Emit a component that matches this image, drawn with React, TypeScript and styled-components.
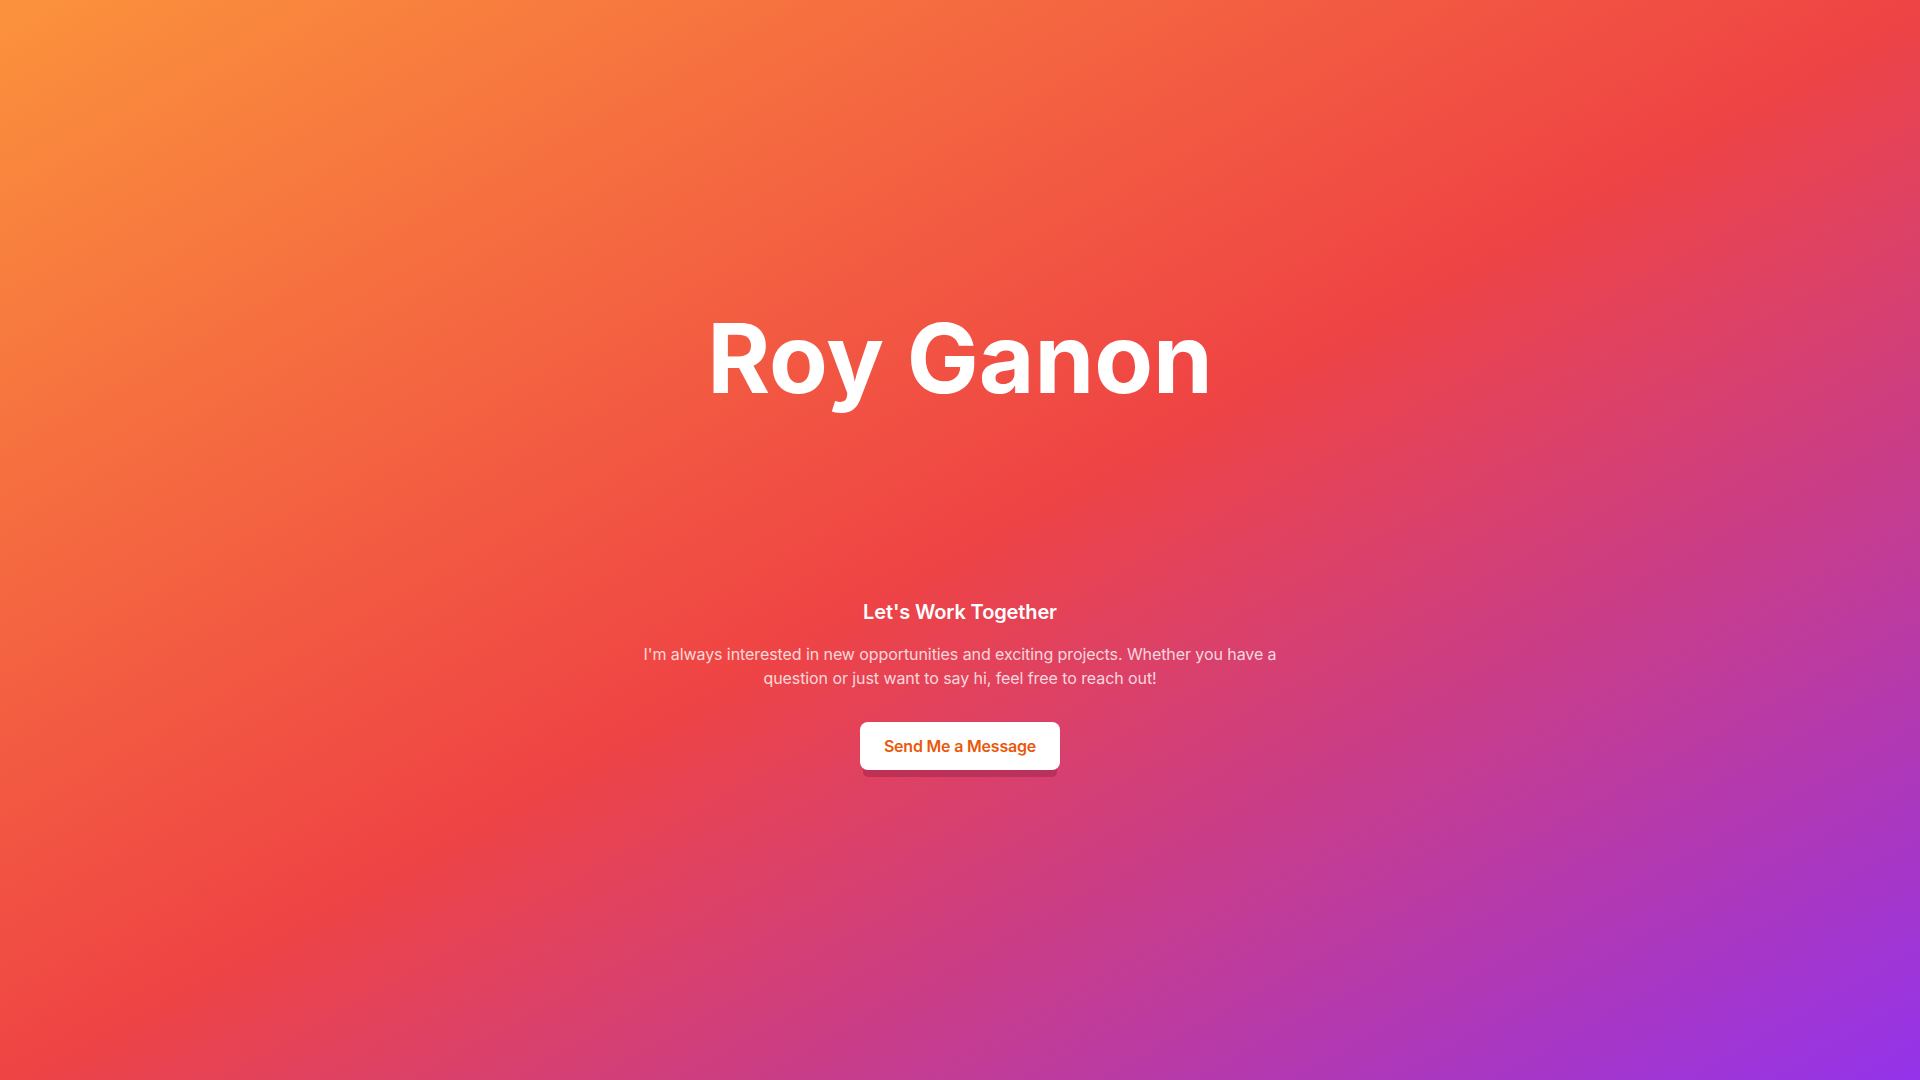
import styled, { createGlobalStyle } from "styled-components";

const GlobalStyle = createGlobalStyle`
  html, body {
    margin: 0;
    padding: 0;
  }

  body {
    font-family: Inter, "Noto Sans", "Liberation Sans", sans-serif;
    -webkit-font-smoothing: antialiased;
  }
`

const Page = styled.main`
  min-height: 100vh;
  box-sizing: border-box;
  display: flex;
  flex-direction: column;
  align-items: center;
  padding: 310px 24px 0;
  background: linear-gradient(to bottom right, #fb923c, #ef4444, #9333ea);
  color: #fff;
  text-align: center;
`

const Title = styled.h1`
  margin: 0;
  font-size: 96px;
  line-height: 1;
  font-weight: 700;
  letter-spacing: 0;
`

const Contact = styled.section`
  display: flex;
  flex-direction: column;
  align-items: center;
  max-width: 672px;
  margin-top: 192px;
`

const Heading = styled.h2`
  margin: 0 0 16px;
  font-size: 20px;
  line-height: 28px;
  font-weight: 600;
  letter-spacing: -0.12px;
`

const Text = styled.p`
  margin: 0 0 32px;
  font-size: 16px;
  line-height: 24px;
  letter-spacing: -0.08px;
  color: rgba(255, 255, 255, 0.8);
`

const Button = styled.button`
  font-family: inherit;
  font-size: 16px;
  line-height: 24px;
  font-weight: 600;
  letter-spacing: -0.2px;
  color: #ea580c;
  background: #fff;
  border: none;
  border-radius: 8px;
  padding: 12px 24px;
  cursor: pointer;
  box-shadow: 0 10px 0 -3px rgba(150, 30, 70, 0.45);
`

export default function App() {
  return (
    <>
      <GlobalStyle />
      <Page>
        <Title>Roy Ganon</Title>
        <Contact>
          <Heading>Let's Work Together</Heading>
          <Text>
            I'm always interested in new opportunities and exciting projects. Whether you have a question or just want to say hi, feel free to reach out!
          </Text>
          <Button>Send Me a Message</Button>
        </Contact>
      </Page>
    </>
  )
}
